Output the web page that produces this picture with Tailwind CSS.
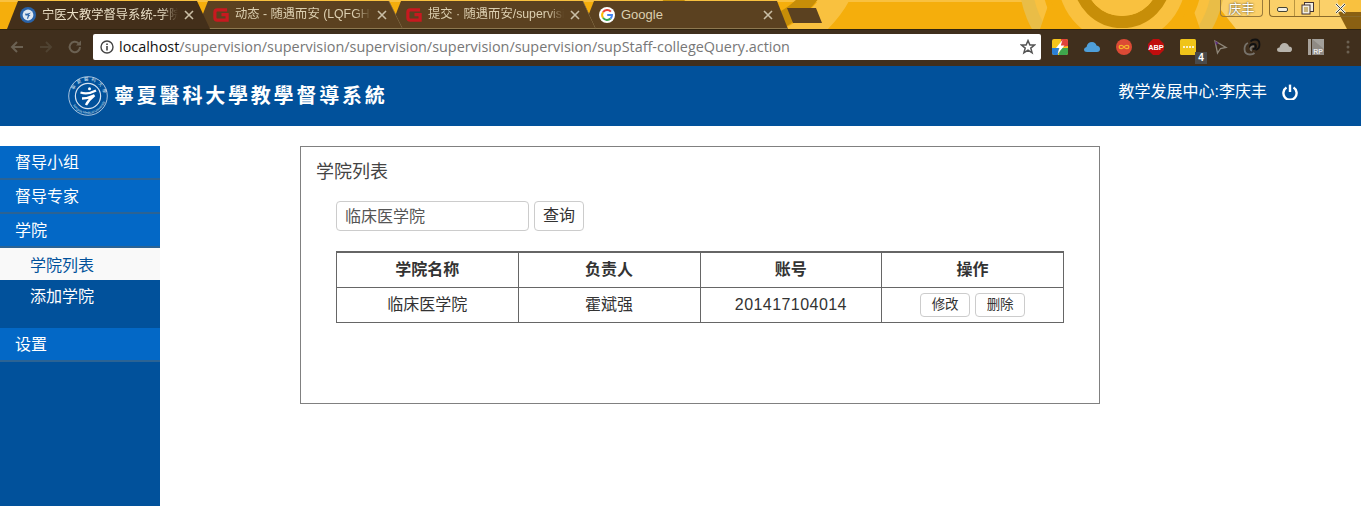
<!DOCTYPE html>
<html lang="zh-CN">
<head>
    <meta charset="UTF-8">
    <meta name="viewport" content="width=device-width, initial-scale=1.0">
    <title>宁医大教学督导系统-学院列表</title>
    <script src="https://cdn.jsdelivr.net/npm/@tailwindcss/browser@4"></script>
</head>
<body class="w-[1361px] h-[509px] overflow-hidden bg-white font-['Liberation_Sans','Noto_Sans_CJK_SC',sans-serif]">
    <!-- browser tab strip -->
    <div class="relative h-[29px] overflow-hidden bg-[#f5ae0c]">
        <svg class="absolute inset-0" width="1361" height="29" viewBox="0 0 1361 29">
            <rect x="0" y="0" width="1361" height="2" fill="#f9c13f"/>
            <circle cx="740" cy="-60" r="112" fill="none" stroke="#f9c13f" stroke-width="26"/>
            <circle cx="740" cy="-60" r="90" fill="none" stroke="#c78e08" stroke-width="16"/>
            <path d="M1213 0L1236 29H1347L1338 0Z" fill="#fbd069"/>
            <path d="M1338 0H1361V12L1347 29H1361V29H1347L1338 10Z" fill="#f9c13f"/>
            <path d="M1338 12H1361V29H1347Z" fill="#8a6012"/>
            <circle cx="1122" cy="-21" r="103" fill="#e9bd47"/>
            <circle cx="1122" cy="-21" r="90" fill="#f9c13f"/>
            <circle cx="1122" cy="-21" r="80" fill="#f5ae0c"/>
            <circle cx="1122" cy="-21" r="64" fill="#f9c13f"/>
            <path d="M1050 0Q1060 20 1080 29H1040ZM1190 0Q1186 20 1170 29H1200Z" fill="#f5ae0c"/>
            <circle cx="1122" cy="-21" r="43" fill="none" stroke="#c78e08" stroke-width="12"/>
            <circle cx="1122" cy="-21" r="37" fill="#f9c13f"/>
        </svg>
        <div class="relative flex pl-[7px] pt-px">
            <div class="relative z-30 w-[203px] h-[28px] pl-[13px] pr-[16px] flex items-center gap-[6px] bg-[#432f1a] text-[12.3px] text-[#eadfc6] [clip-path:polygon(0_100%,11px_0,190px_0,203px_100%)]">
                <svg class="shrink-0" width="16" height="16" viewBox="0 0 16 16"><circle cx="8" cy="8" r="8" fill="#2a63a8"/><circle cx="8" cy="8" r="5.4" fill="#dfe8f2"/><path d="M5 6.5Q8 7 11 5.5L8.5 8H10.5Q8.5 9 8 12L7 11.5Q7.5 9.5 8 8.5L5.5 8.5Z" fill="#2a63a8"/></svg>
                <span class="flex-1 min-w-0 overflow-hidden whitespace-nowrap [mask-image:linear-gradient(to_right,black_88%,transparent)]">宁医大教学督导系统-学院列表</span>
                <svg class="shrink-0" width="10" height="10" viewBox="0 0 10 10"><path d="M1 1L9 9M9 1L1 9" stroke="#c9bea5" stroke-width="1.6"/></svg>
            </div>
            <div class="relative z-20 w-[206px] h-[28px] -ml-[13px] pl-[16px] pr-[16px] flex items-center gap-[6px] bg-[#5b4120] border-b border-[#8d7850] text-[12.3px] text-[#dccfb0] [clip-path:polygon(0_100%,11px_0,192px_0,206px_100%)]">
                <svg class="absolute inset-0" width="206" height="28" viewBox="0 0 206 28"><path d="M192 0L206 28" stroke="#8d7850"/></svg>
                <svg class="shrink-0" width="16" height="16" viewBox="0 0 17 16"><path d="M15 2.5H4.5Q2 2.5 2 5V11Q2 13.5 4.5 13.5H15V7.5H9" fill="none" stroke="#c8191f" stroke-width="3.4"/></svg>
                <span class="flex-1 min-w-0 overflow-hidden whitespace-nowrap [mask-image:linear-gradient(to_right,black_88%,transparent)]">动态 - 随遇而安 (LQFGH)</span>
                <svg class="shrink-0" width="10" height="10" viewBox="0 0 10 10"><path d="M1 1L9 9M9 1L1 9" stroke="#c9bea5" stroke-width="1.6"/></svg>
            </div>
            <div class="relative z-10 w-[206px] h-[28px] -ml-[13px] pl-[16px] pr-[16px] flex items-center gap-[6px] bg-[#5b4120] border-b border-[#8d7850] text-[12.3px] text-[#dccfb0] [clip-path:polygon(0_100%,11px_0,193px_0,206px_100%)]">
                <svg class="absolute inset-0" width="206" height="28" viewBox="0 0 206 28"><path d="M193 0L206 28" stroke="#8d7850"/></svg>
                <svg class="shrink-0" width="16" height="16" viewBox="0 0 17 16"><path d="M15 2.5H4.5Q2 2.5 2 5V11Q2 13.5 4.5 13.5H15V7.5H9" fill="none" stroke="#c8191f" stroke-width="3.4"/></svg>
                <span class="flex-1 min-w-0 overflow-hidden whitespace-nowrap [mask-image:linear-gradient(to_right,black_88%,transparent)]">提交 · 随遇而安/supervision</span>
                <svg class="shrink-0" width="10" height="10" viewBox="0 0 10 10"><path d="M1 1L9 9M9 1L1 9" stroke="#c9bea5" stroke-width="1.6"/></svg>
            </div>
            <div class="w-[205px] h-[28px] -ml-[13px] pl-[16px] pr-[15px] flex items-center gap-[6px] bg-[#5b4120] border-b border-[#8d7850] text-[13px] text-[#dccfb0] [clip-path:polygon(0_100%,11px_0,194px_0,205px_100%)]">
                <svg class="shrink-0" width="16" height="16" viewBox="0 0 16 16"><circle cx="8" cy="8" r="8" fill="#fff"/><path d="M11.9 4.6A5 5 0 0 0 4 5.2" fill="none" stroke="#ea4335" stroke-width="2"/><path d="M4 5.2A5 5 0 0 0 4 10.8" fill="none" stroke="#fbbc05" stroke-width="2"/><path d="M4 10.8A5 5 0 0 0 11.6 11.5" fill="none" stroke="#34a853" stroke-width="2"/><path d="M11.6 11.5A5 5 0 0 0 13 8H8.2" fill="none" stroke="#4285f4" stroke-width="2"/></svg>
                <span class="flex-1 min-w-0 overflow-hidden whitespace-nowrap">Google</span>
                <svg class="shrink-0" width="10" height="10" viewBox="0 0 10 10"><path d="M1 1L9 9M9 1L1 9" stroke="#c9bea5" stroke-width="1.6"/></svg>
            </div>
            <div class="w-[35px] h-[15px] -ml-[1px] mt-[7px] bg-[#5b4120] [clip-path:polygon(0_0,29px_0,35px_100%,6px_100%)]"></div>
        </div>
        <!-- window buttons -->
        <div class="absolute top-0 right-0 flex gap-[6px] h-[17px] text-[#333]">
            <div class="w-[43px] h-[17px] border border-t-0 border-[#9a7a3a] rounded-b-[4px] flex items-center justify-center text-[13px] leading-none text-[#fff] [text-shadow:0_0_2px_#222]">庆丰</div>
            <div class="w-[92px] h-[17px] border border-t-0 border-r-0 border-[#8a6a2a] rounded-bl-[4px] flex">
                <div class="w-[25px] flex items-center justify-center border-r border-[#b89440]"><div class="w-[11px] h-[5px] mt-[3px] bg-[#f3efe2] border border-[#443]  rounded-[2px]"></div></div>
                <div class="w-[25px] flex items-center justify-center border-r border-[#b89440]"><svg width="13" height="13" viewBox="0 0 13 13"><rect x="3.5" y="0.5" width="9" height="9" fill="#f3efe2" stroke="#433"/><rect x="1" y="3" width="8" height="9" fill="#f3efe2" stroke="#433"/><rect x="3" y="5" width="4" height="5" fill="#c9b47a"/></svg></div>
                <div class="flex-1 flex items-center justify-center"><svg width="11" height="11" viewBox="0 0 11 11"><path d="M1 1L10 10M10 1L1 10" stroke="#f3efe2" stroke-width="2.6"/><path d="M1 1L10 10M10 1L1 10" stroke="#443" stroke-width="1"/></svg></div>
            </div>
        </div>
    </div>

    <!-- browser toolbar -->
    <div class="h-[37px] bg-[#402f1d] flex items-center border-t border-[#30240f] pb-[2px]">
        <div class="w-[93px] flex items-center pl-[9px] gap-[13px] shrink-0">
            <svg width="16" height="16" viewBox="0 0 16 16"><path d="M14 8H3M8 3L3 8L8 13" fill="none" stroke="#6b6152" stroke-width="2"/></svg>
            <svg width="16" height="16" viewBox="0 0 16 16"><path d="M2 8H13M8 3L13 8L8 13" fill="none" stroke="#4f4231" stroke-width="2"/></svg>
            <svg width="16" height="16" viewBox="0 0 16 16"><path d="M13 8A5.2 5.2 0 1 1 11.4 4.2" fill="none" stroke="#6b6152" stroke-width="2"/><path d="M14 1.5V6.5H9Z" fill="#6b6152"/></svg>
        </div>
        <div class="w-[948px] h-[26px] bg-white rounded-[2px] flex items-center pl-[7px] pr-[5px] shrink-0">
            <svg class="shrink-0" width="14" height="14" viewBox="0 0 14 14"><circle cx="7" cy="7" r="6" fill="none" stroke="#444" stroke-width="1.4"/><path d="M7 6V10.5M7 3.5V5" stroke="#444" stroke-width="1.6"/></svg>
            <span class="ml-[5px] flex-1 text-[14.4px] text-[#777] whitespace-nowrap font-['Open_Sans',sans-serif]"><span class="text-[#111]">localhost</span>/supervision/supervision/supervision/supervision/supervision/supStaff-collegeQuery.action</span>
            <svg class="shrink-0" width="16" height="16" viewBox="0 0 16 16"><path d="M8 1.6L9.9 6H14.6L10.8 9.1L12.1 13.9L8 11.2L3.9 13.9L5.2 9.1L1.4 6H6.1Z" fill="none" stroke="#555" stroke-width="1.5"/></svg>
        </div>
        <div class="flex shrink-0 pl-[3px]">
            <div class="w-[32px] h-[32px] flex items-center justify-center">
                <svg width="16" height="16" viewBox="0 0 16 16"><rect width="16" height="16" rx="2" fill="#f7c51c"/><path d="M9 0H14Q16 0 16 2V7L9 8Z" fill="#e0433a"/><path d="M0 9H7L6 16H2Q0 16 0 14Z" fill="#2b7fd6"/><path d="M8 9H16V14Q16 16 14 16H7Z" fill="#3fa74c"/><path d="M10.5 1L4 9H7.5L5.5 15L12.5 6.5H8.8Z" fill="#fff"/></svg>
            </div>
            <div class="w-[32px] h-[32px] flex items-center justify-center">
                <svg width="16" height="10" viewBox="0 0 16 10"><path d="M3 10Q0 10 0 7.5Q0 5.5 2.5 5Q3.5 0 8 0Q11.5 0 12.5 3.5Q16 4 16 7Q16 10 13 10Z" fill="#4f9fd9"/></svg>
            </div>
            <div class="w-[32px] h-[32px] flex items-center justify-center">
                <svg width="16" height="16" viewBox="0 0 16 16"><circle cx="8" cy="8" r="8" fill="#dc4a35"/><path d="M8 8C6.5 5.8 3.2 5.8 3.2 8S6.5 10.2 8 8C9.5 5.8 12.8 5.8 12.8 8S9.5 10.2 8 8Z" fill="none" stroke="#f6b32b" stroke-width="1.3"/></svg>
            </div>
            <div class="w-[32px] h-[32px] flex items-center justify-center">
                <svg width="16" height="16" viewBox="0 0 16 16"><path d="M5 0H11L16 5V11L11 16H5L0 11V5Z" fill="#c00d0d"/><text x="8" y="10.8" text-anchor="middle" font-size="7.4" font-weight="700" fill="#fff" font-family="Liberation Sans">ABP</text></svg>
            </div>
            <div class="relative w-[32px] h-[32px] flex items-center justify-center">
                <svg width="16" height="16" viewBox="0 0 16 16"><rect width="16" height="16" rx="1.5" fill="#f0c419"/><circle cx="4" cy="8" r="1" fill="#fff"/><circle cx="7" cy="8" r="1" fill="#fff"/><circle cx="10" cy="8" r="1" fill="#fff"/><circle cx="13" cy="8" r="1" fill="#fff"/></svg>
                <span class="absolute right-[-3px] bottom-[-1px] w-[12px] h-[12px] bg-[#4a4a4a] text-white text-[10px] font-bold leading-[12px] text-center">4</span>
            </div>
            <div class="w-[32px] h-[32px] flex items-center justify-center">
                <svg width="16" height="16" viewBox="0 0 16 16"><path d="M3 2L14 8.5L8.5 9.5L5.5 14Z" fill="none" stroke="#8f877a" stroke-width="1.3"/><path d="M3 2L6.5 4L4 6Z" fill="#5a2a7a"/></svg>
            </div>
            <div class="w-[32px] h-[32px] flex items-center justify-center">
                <svg width="18" height="18" viewBox="0 0 18 18"><path d="M7 9.5Q7 6 10.5 6Q13 6 13 8.5Q13 11 10 11" fill="none" stroke="#111" stroke-width="1.8"/><path d="M7.5 3.5Q9 1.5 12 1.5Q16.5 1.5 16.5 6.5Q16.5 11 12.5 12" fill="none" stroke="#111" stroke-width="1.8"/><path d="M11 8.5Q8 8 7.5 11Q7.5 12.5 9 12.5M5 5Q1.5 6.5 1.5 11Q1.5 16.5 7 16.5Q10 16.5 11.5 15" fill="none" stroke="#77726a" stroke-width="1.8"/></svg>
            </div>
            <div class="w-[32px] h-[32px] flex items-center justify-center">
                <svg width="15" height="9" viewBox="0 0 15 9"><path d="M3 9Q0 9 0 6.5Q0 4.5 2.5 4.5Q3.5 0 7.5 0Q11 0 12 3.5Q15 3.5 15 6.2Q15 9 12 9Z" fill="#b8b4ac"/></svg>
            </div>
            <div class="w-[32px] h-[32px] flex items-center justify-center">
                <svg width="16" height="16" viewBox="0 0 16 16"><rect width="3" height="16" fill="#a8a29a"/><rect x="4" width="12" height="16" fill="#8f8a84"/><path d="M4 0H16V10Z" fill="#a3a09b"/><text x="10" y="14.5" text-anchor="middle" font-size="7" font-weight="700" fill="#e8e8e8" font-family="Liberation Sans">RP</text></svg>
            </div>
            <div class="w-[32px] h-[32px] flex items-center justify-center">
                <svg width="4" height="14" viewBox="0 0 4 14"><circle cx="2" cy="2" r="1.5" fill="#6b6152"/><circle cx="2" cy="7" r="1.5" fill="#6b6152"/><circle cx="2" cy="12" r="1.5" fill="#6b6152"/></svg>
            </div>
        </div>
    </div>

    <!-- page header -->
    <header class="h-[60px] bg-[#01519b] flex items-center">
        <svg class="ml-[68px] shrink-0" width="40" height="40" viewBox="0 0 40 40">
            <circle cx="20" cy="20" r="19.3" fill="none" stroke="#d5e2f0" stroke-width="0.8"/>
            <circle cx="20" cy="20" r="12.6" fill="none" stroke="#d5e2f0" stroke-width="1.2"/>
            <defs>
                <path id="ringTop" d="M4.6 20A15.4 15.4 0 0 1 35.4 20"/>
                <path id="ringBot" d="M2.2 20A17.8 17.8 0 0 0 37.8 20"/>
            </defs>
            <text font-size="4.6" fill="#d5e2f0" font-family="Noto Sans CJK TC" letter-spacing="2.4"><textPath href="#ringTop" startOffset="6">寧夏醫科大學</textPath></text>
            <text font-size="3.4" fill="#d5e2f0" font-family="Liberation Sans"><textPath href="#ringBot" startOffset="10">Ningxia Medical University</textPath></text>
            <circle cx="21.5" cy="12.8" r="1.5" fill="#fff"/>
            <path d="M12.5 16.5Q20 18.8 28 14.5" fill="none" stroke="#fff" stroke-width="2.2"/>
            <path d="M14 22.5Q20 22.4 26.5 19.3Q20.5 24 18 29" fill="none" stroke="#fff" stroke-width="2.4"/>
        </svg>
        <h1 class="ml-[6px] -mt-[2px] text-[20px] leading-none tracking-[2.8px] font-bold text-white font-['Noto_Sans_CJK_TC',sans-serif]">寧夏醫科大學教學督導系統</h1>
        <div class="ml-auto mr-[63px] flex items-center gap-[15px] -mt-[9px]">
            <span class="text-[16px] text-white whitespace-nowrap">教学发展中心:李庆丰</span>
            <svg width="16" height="16" viewBox="0 0 16 16"><path d="M4.5 3.6A6.6 6.6 0 1 0 11.5 3.6" fill="none" stroke="#fff" stroke-width="2.4"/><path d="M8 0.6V8" stroke="#fff" stroke-width="2.4"/></svg>
        </div>
    </header>

    <div class="flex mt-[20px]">
        <!-- sidebar -->
        <nav class="w-[160px] h-[360px] bg-[#01519b] shrink-0 text-[16px] text-white">
            <div class="h-[34px] pl-[15px] leading-[34px] bg-[#0368c6] border-b-2 border-[#2b6394]">督导小组</div>
            <div class="h-[34px] pl-[15px] leading-[34px] bg-[#0368c6] border-b-2 border-[#2b6394]">督导专家</div>
            <div class="h-[34px] pl-[15px] leading-[34px] bg-[#0368c6] border-b-2 border-[#2b6394]">学院</div>
            <ul class="mb-[16px]">
                <li class="h-[32px] pl-[30px] leading-[36px] bg-[#f9f9f9] text-[#01519b]">学院列表</li>
                <li class="h-[32px] pl-[30px] leading-[34px]">添加学院</li>
            </ul>
            <div class="h-[34px] pl-[15px] leading-[34px] bg-[#0368c6] border-b-2 border-[#2b6394]">设置</div>
        </nav>

        <!-- main panel -->
        <main class="ml-[140px]">
            <div class="w-[800px] h-[258px] border border-[#808080] pl-[15px] pt-[13px]">
                <h2 class="text-[18px] leading-[24px] text-[#444]">学院列表</h2>
                <div class="ml-[20px] mt-[17px] flex gap-[5px]">
                    <div class="w-[193px] h-[30px] border border-[#ccc] rounded-[4px] pl-[8px] leading-[29px] text-[16px] text-[#555]">临床医学院</div>
                    <button class="w-[50px] h-[30px] border border-[#ccc] rounded-[4px] text-[16px] leading-none text-[#333]">查询</button>
                </div>
                <table class="ml-[20px] mt-[20px] w-[728px] table-fixed border-collapse text-[16px] text-[#333]">
                    <tr class="h-[35px]">
                        <th class="border border-t-2 border-[#666] font-bold">学院名称</th>
                        <th class="border border-t-2 border-[#666] font-bold">负责人</th>
                        <th class="border border-t-2 border-[#666] font-bold">账号</th>
                        <th class="border border-t-2 border-[#666] font-bold">操作</th>
                    </tr>
                    <tr class="h-[35px]">
                        <td class="border border-[#666] text-center">临床医学院</td>
                        <td class="border border-[#666] text-center">霍斌强</td>
                        <td class="border border-[#666] text-center tracking-[0.45px]">201417104014</td>
                        <td class="border border-[#666] text-center">
                            <div class="flex justify-center gap-[5px]">
                                <button class="w-[50px] h-[24px] border border-[#ccc] rounded-[4px] text-[13.5px] leading-none">修改</button>
                                <button class="w-[50px] h-[24px] border border-[#ccc] rounded-[4px] text-[13.5px] leading-none">删除</button>
                            </div>
                        </td>
                    </tr>
                </table>
            </div>
        </main>
    </div>
</body>
</html>
